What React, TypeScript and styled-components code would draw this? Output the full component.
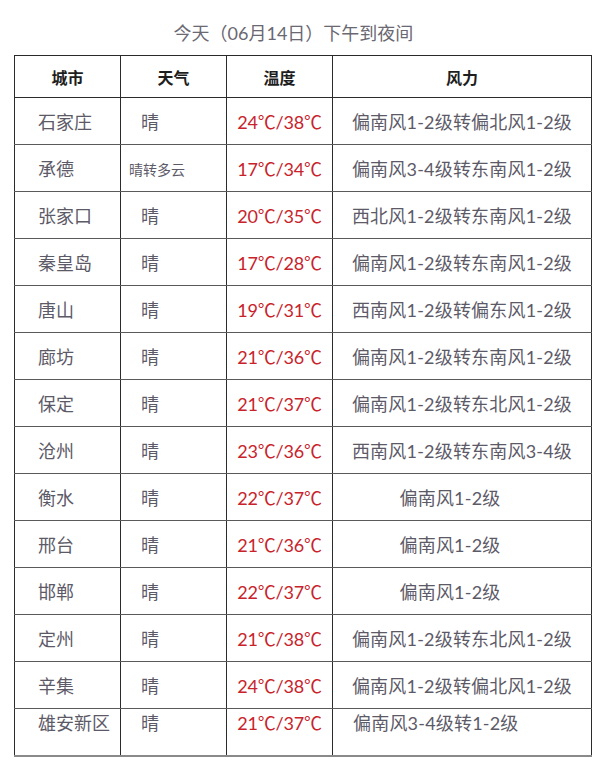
import React from "react";
import styled, { createGlobalStyle } from "styled-components";

const Global = createGlobalStyle`
  html, body { margin: 0; padding: 0; background: #ffffff; }
  body { font-family: "Lato", "Noto Sans CJK SC", sans-serif; }
`;

const Page = styled.div`
  width: 600px;
  padding-top: 21px;
  box-sizing: border-box;
`;

const Title = styled.div`
  width: 573px;
  margin-left: 14px;
  text-align: center;
  font-size: 18px;
  line-height: 24px;
  color: #6a6872;
  height: 34px;
  padding-right: 14px;
  box-sizing: border-box;
`;

const Table = styled.table`
  margin-left: 14px;
  width: 574px;
  border-collapse: collapse;
  table-layout: fixed;
  border-bottom: 2px solid #8a8a8a;
`;

const HeadCell = styled.th<{ $w: number }>`
  width: ${(p) => p.$w}px;
  height: 41px;
  padding: 0;
  border: 1px solid #2b2b2b;
  font-family: "Noto Sans CJK SC", sans-serif;
  font-weight: 700;
  font-size: 16px;
  color: #1e1e1e;
  text-align: center;
  vertical-align: middle;
`;

const Cell = styled.td<{ $align?: string; $pad?: number; $top?: boolean }>`
  height: 46px;
  padding: 0 0 0 ${(p) => p.$pad ?? 0}px;
  border: 1px solid #2b2b2b;
  border-bottom-color: #5a5a5a;
  font-size: 18px;
  color: #5d5a68;
  text-align: ${(p) => p.$align ?? "left"};
  vertical-align: ${(p) => (p.$top ? "top" : "middle")};
  white-space: nowrap;
`;

const Small = styled.span`
  font-size: 14px;
`;

const Temp = styled.span`
  color: #c8232b;
  letter-spacing: -0.2px;
`;

const Wind = styled.span<{ $short?: boolean }>`
  display: inline-block;
  margin-right: ${(p) => (p.$short ? 24 : 0)}px;
  letter-spacing: 0.2px;
`;

type Row = { city: string; weather: string; temp: string; wind: string };

const rows: Row[] = [
  { city: "石家庄", weather: "晴", temp: "24℃/38℃", wind: "偏南风1-2级转偏北风1-2级" },
  { city: "承德", weather: "晴转多云", temp: "17℃/34℃", wind: "偏南风3-4级转东南风1-2级" },
  { city: "张家口", weather: "晴", temp: "20℃/35℃", wind: "西北风1-2级转东南风1-2级" },
  { city: "秦皇岛", weather: "晴", temp: "17℃/28℃", wind: "偏南风1-2级转东南风1-2级" },
  { city: "唐山", weather: "晴", temp: "19℃/31℃", wind: "西南风1-2级转偏东风1-2级" },
  { city: "廊坊", weather: "晴", temp: "21℃/36℃", wind: "偏南风1-2级转东南风1-2级" },
  { city: "保定", weather: "晴", temp: "21℃/37℃", wind: "偏南风1-2级转东北风1-2级" },
  { city: "沧州", weather: "晴", temp: "23℃/36℃", wind: "西南风1-2级转东南风3-4级" },
  { city: "衡水", weather: "晴", temp: "22℃/37℃", wind: "偏南风1-2级" },
  { city: "邢台", weather: "晴", temp: "21℃/36℃", wind: "偏南风1-2级" },
  { city: "邯郸", weather: "晴", temp: "22℃/37℃", wind: "偏南风1-2级" },
  { city: "定州", weather: "晴", temp: "21℃/38℃", wind: "偏南风1-2级转东北风1-2级" },
  { city: "辛集", weather: "晴", temp: "24℃/38℃", wind: "偏南风1-2级转偏北风1-2级" },
  { city: "雄安新区", weather: "晴", temp: "21℃/37℃", wind: "偏南风3-4级转1-2级" },
];

export default function App() {
  return (
    <Page>
      <Global />
      <Title>今天（06月14日）下午到夜间</Title>
      <Table>
        <thead>
          <tr>
            <HeadCell $w={105}>城市</HeadCell>
            <HeadCell $w={105}>天气</HeadCell>
            <HeadCell $w={105}>温度</HeadCell>
            <HeadCell $w={258}>风力</HeadCell>
          </tr>
        </thead>
        <tbody>
          {rows.map((r, i) => {
            const last = i === rows.length - 1;
            const short = r.wind.length <= 7;
            return (
              <tr key={r.city}>
                <Cell $pad={23} $top={last}>{r.city}</Cell>
                {r.weather.length > 1 ? (
                  <Cell $pad={8} $top={last}><Small>{r.weather}</Small></Cell>
                ) : (
                  <Cell $pad={20} $top={last}>{r.weather}</Cell>
                )}
                <Cell $align="center" $top={last}><Temp>{r.temp}</Temp></Cell>
                {last ? (
                  <Cell $pad={20} $top><Wind>{r.wind}</Wind></Cell>
                ) : (
                  <Cell $align="center"><Wind $short={short}>{r.wind}</Wind></Cell>
                )}
              </tr>
            );
          })}
        </tbody>
      </Table>
    </Page>
  );
}
